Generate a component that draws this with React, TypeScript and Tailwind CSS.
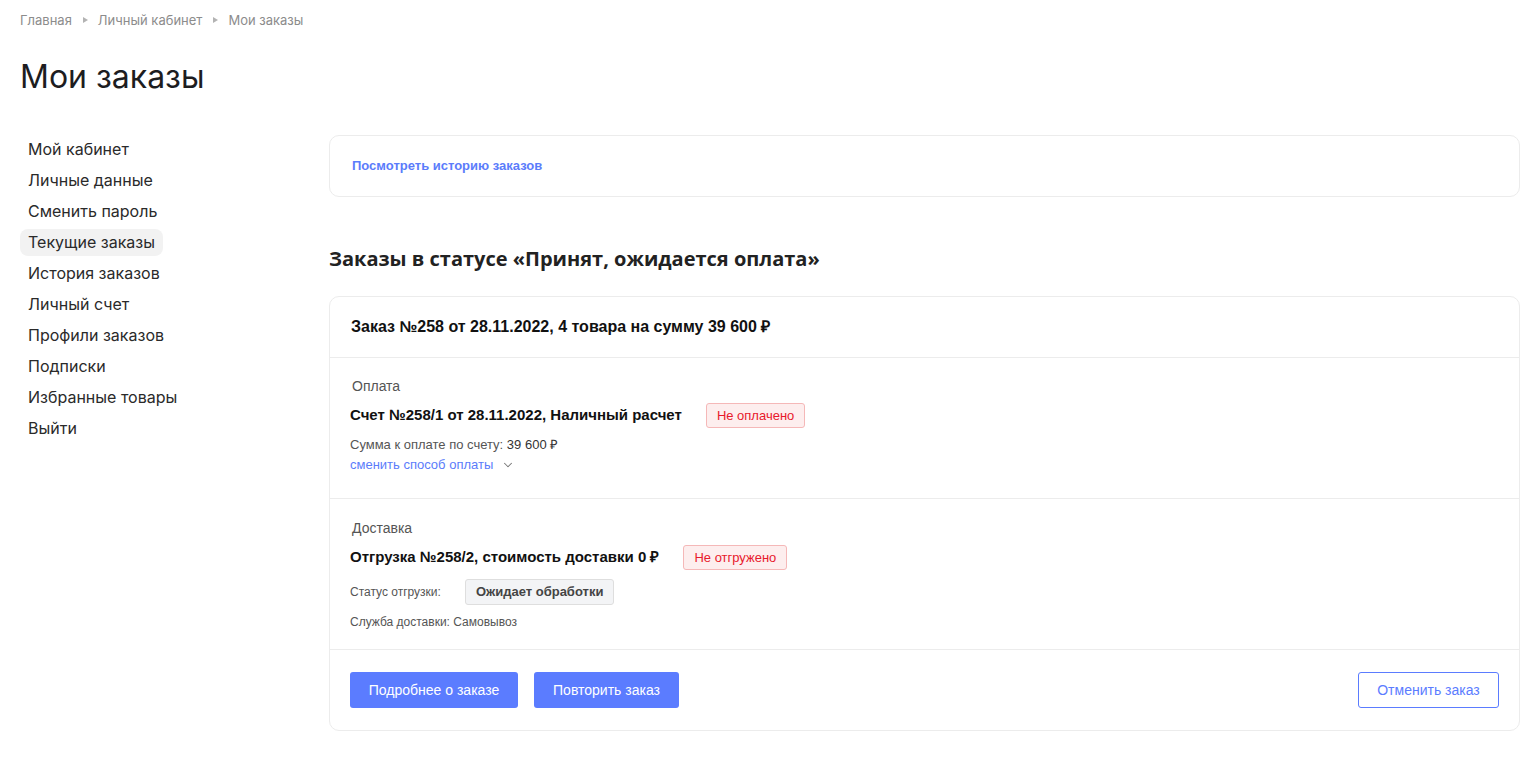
import { ChevronDown } from "lucide-react";

const menu = [
  "Мой кабинет",
  "Личные данные",
  "Сменить пароль",
  "Текущие заказы",
  "История заказов",
  "Личный счет",
  "Профили заказов",
  "Подписки",
  "Избранные товары",
  "Выйти",
];

const crumbs = ["Главная", "Личный кабинет", "Мои заказы"];

function Crumb({ last, label }: { last: boolean; label: string }) {
  return (
    <span className="flex items-center">
      <span>{label}</span>
      {!last && (
        <span className="mr-[10px] ml-[11px] inline-block h-0 w-0 border-y-[3.5px] border-l-[5px] border-y-transparent border-l-[#b3b3b3]" />
      )}
    </span>
  );
}

export default function App() {
  return (
    <div className="min-h-screen bg-white px-5 font-['Liberation_Sans',Arial,sans-serif] text-[#222]">
      {/* Breadcrumbs */}
      <div className="flex items-center pt-3 font-['Inter',sans-serif] text-[13px] leading-4 text-[#8c8c8c]">
        {crumbs.map((c, i) => (
          <Crumb key={c} label={c} last={i === crumbs.length - 1} />
        ))}
      </div>

      <h1 className="mt-[29px] font-['Inter',sans-serif] text-[32px] leading-[40px] font-normal text-[#1d1d1f]">
        Мои заказы
      </h1>

      <div className="mt-[38px] flex">
        {/* Sidebar */}
        <aside className="w-[309px] shrink-0 pt-[1px]">
          <ul className="flex flex-col gap-[4px]">
            {menu.map((item) => (
              <li
                key={item}
                className={
                  "w-fit rounded-lg px-2 font-['Inter',sans-serif] text-[16px] leading-[27px] text-[#2a2a2a] " +
                  (item === "Текущие заказы" ? "bg-[#f2f2f2]" : "")
                }
              >
                {item}
              </li>
            ))}
          </ul>
        </aside>

        {/* Main */}
        <main className="min-w-0 flex-1">
          <div className="flex h-[62px] items-center rounded-[10px] border border-[#ececec] px-[22px]">
            <a className="text-[13px] font-bold text-[#5b7cfb]">Посмотреть историю заказов</a>
          </div>

          <h2 className="mt-[48px] font-['Open_Sans',sans-serif] text-[20px] leading-[28px] font-bold text-[#222]">
            Заказы в статусе «Принят, ожидается оплата»
          </h2>

          <div className="mt-[23px] mb-8 rounded-[10px] border border-[#ececec]">
            {/* Header */}
            <div className="flex h-[61px] items-center border-b border-[#ececec] px-[21px]">
              <span className="text-[16px] font-bold text-[#111]">
                Заказ №258 от 28.11.2022, 4 товара на сумму 39 600 ₽
              </span>
            </div>

            {/* Payment */}
            <div className="border-b border-[#ececec] px-[20px] pt-[18px] pb-[24px]">
              <div className="pl-[2px] text-[14px] leading-5 text-[#555]">Оплата</div>
              <div className="mt-[7px] flex h-[25px] items-center">
                <span className="text-[15px] font-bold text-[#111]">
                  Счет №258/1 от 28.11.2022, Наличный расчет
                </span>
                <span className="ml-6 flex h-[25px] items-center rounded-[3px] border border-[#f5b8b8] bg-[#fdeeee] px-[10px] text-[13px] text-[#e8192c]">
                  Не оплачено
                </span>
              </div>
              <div className="mt-[9px] text-[13px] leading-4 text-[#555]">
                Сумма к оплате по счету: <span className="text-[#333]">39 600 ₽</span>
              </div>
              <div className="mt-[3px] flex items-center text-[13px] leading-[18px] text-[#5b7cfb]">
                сменить способ оплаты
                <ChevronDown size={14} strokeWidth={1.75} className="ml-[8px] text-[#777]" />
              </div>
            </div>

            {/* Delivery */}
            <div className="border-b border-[#ececec] px-[20px] pt-[19px] pb-[19px]">
              <div className="pl-[2px] text-[14px] leading-5 text-[#555]">Доставка</div>
              <div className="mt-[7px] flex h-[25px] items-center">
                <span className="text-[15px] font-bold text-[#111]">
                  Отгрузка №258/2, стоимость доставки 0 ₽
                </span>
                <span className="ml-6 flex h-[25px] items-center rounded-[3px] border border-[#f5b8b8] bg-[#fdeeee] px-[10px] text-[13px] text-[#e8192c]">
                  Не отгружено
                </span>
              </div>
              <div className="mt-[9px] flex items-center gap-6">
                <span className="text-[12px] text-[#555]">Статус отгрузки:</span>
                <span className="flex h-[26px] items-center rounded-[3px] border border-[#dedede] bg-[#f3f4f6] px-[10px] text-[13px] font-bold text-[#444]">
                  Ожидает обработки
                </span>
              </div>
              <div className="mt-[9px] text-[12px] leading-4 text-[#555]">Служба доставки: Самовывоз</div>
            </div>

            {/* Actions */}
            <div className="flex items-center px-[20px] py-[22px]">
              <button className="h-9 w-[168px] rounded-[3px] bg-[#5b7cff] text-[14px] text-white">
                Подробнее о заказе
              </button>
              <button className="ml-4 h-9 w-[145px] rounded-[3px] bg-[#5b7cff] text-[14px] text-white">
                Повторить заказ
              </button>
              <button className="ml-auto h-9 w-[141px] rounded-[3px] border border-[#5b7cff] bg-white text-[14px] text-[#5b7cff]">
                Отменить заказ
              </button>
            </div>
          </div>
        </main>
      </div>
    </div>
  );
}
